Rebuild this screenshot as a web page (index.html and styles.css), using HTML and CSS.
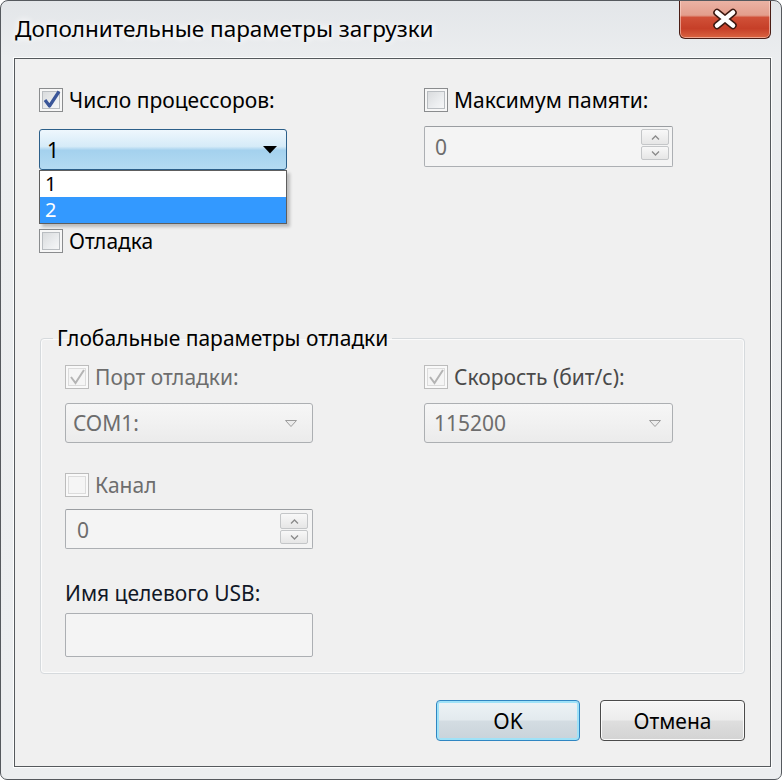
FILE: index.html
```html
<!DOCTYPE html>
<html lang="ru">
<head>
<meta charset="utf-8">
<title>Дополнительные параметры загрузки</title>
<link rel="stylesheet" href="styles.css">
</head>
<body>
<div class="window">
  <div class="titlebar">
    <span class="title">Дополнительные параметры загрузки</span>
    <button class="close" aria-label="Закрыть">
      <svg width="28" height="22" viewBox="0 0 28 22"><path class="x-out" d="M6 4.5 L22 17.5 M22 4.5 L6 17.5"/><path class="x-in" d="M6 4.5 L22 17.5 M22 4.5 L6 17.5"/></svg>
    </button>
  </div>
  <div class="client">
    <div class="top">
      <div class="col">
        <div class="check">
          <span class="cb"><svg viewBox="0 0 24 24"><path class="tick" d="M6 12 L10.5 18 L20 3.5"/></svg></span>
          <span>Число процессоров:</span>
        </div>
        <div class="combo-wrap">
          <div class="combo focus"><span class="cval">1</span><svg width="14" height="8" viewBox="0 0 14 8"><path d="M0 0 H14 L7 7.5 Z" fill="#000"/></svg></div>
          <ul class="listbox">
            <li>1</li>
            <li class="sel">2</li>
          </ul>
        </div>
        <div class="check check-debug">
          <span class="cb"></span>
          <span>Отладка</span>
        </div>
      </div>
      <div class="col">
        <div class="check">
          <span class="cb"></span>
          <span>Максимум памяти:</span>
        </div>
        <div class="spin spin-top">
          <span class="sval">0</span>
          <span class="sbtns">
            <span class="sb"><svg width="9" height="5" viewBox="0 0 9 5"><path d="M1 4.5 L4.5 1 L8 4.5"/></svg></span>
            <span class="sb"><svg width="9" height="5" viewBox="0 0 9 5"><path d="M1 0.5 L4.5 4 L8 0.5"/></svg></span>
          </span>
        </div>
      </div>
    </div>

    <fieldset class="group">
      <legend>Глобальные параметры отладки</legend>
      <div class="group-grid">
        <div class="col">
          <div class="check dis">
            <span class="cb"><svg viewBox="0 0 24 24"><path class="tick-dis" d="M6 12 L10.5 18 L19 5"/></svg></span>
            <span>Порт отладки:</span>
          </div>
          <div class="combo dcombo"><span class="cval">COM1:</span><svg width="12" height="7" viewBox="0 0 12 7"><path d="M0.5 0.5 H11.5 L6 6.5 Z" fill="#ececec" stroke="#9c9c9c"/></svg></div>
          <div class="check dis check-canal">
            <span class="cb"></span>
            <span>Канал</span>
          </div>
          <div class="spin spin-canal">
            <span class="sval">0</span>
            <span class="sbtns">
              <span class="sb"><svg width="9" height="5" viewBox="0 0 9 5"><path d="M1 4.5 L4.5 1 L8 4.5"/></svg></span>
              <span class="sb"><svg width="9" height="5" viewBox="0 0 9 5"><path d="M1 0.5 L4.5 4 L8 0.5"/></svg></span>
            </span>
          </div>
          <div class="usb-label">Имя целевого USB:</div>
          <div class="textbox"></div>
        </div>
        <div class="col">
          <div class="check dis dis-dark">
            <span class="cb"><svg viewBox="0 0 24 24"><path class="tick-dis" d="M6 12 L10.5 18 L19 5"/></svg></span>
            <span>Скорость (бит/с):</span>
          </div>
          <div class="combo dcombo dcombo-r"><span class="cval">115200</span><svg width="12" height="7" viewBox="0 0 12 7"><path d="M0.5 0.5 H11.5 L6 6.5 Z" fill="#ececec" stroke="#9c9c9c"/></svg></div>
        </div>
      </div>
    </fieldset>

    <div class="buttons">
      <button class="btn btn-default">OK</button>
      <button class="btn btn-cancel">Отмена</button>
    </div>
  </div>
</div>
</body>
</html>
```
FILE: styles.css
```css
html, body {
  margin: 0;
  padding: 0;
  background: #ffffff;
}

body {
  font-family: "Noto Sans", "Open Sans", sans-serif;
  font-weight: 400;
  color: #000;
}

.window {
  box-sizing: border-box;
  width: 782px;
  height: 780px;
  border: 1px solid #55595e;
  border-radius: 8px 8px 7px 7px;
  padding: 0 10px 12px 13px;
  background: linear-gradient(180deg, #e3e6e9 0, #ebedef 57px, #eceef0 100%);
  display: flex;
  flex-direction: column;
  overflow: hidden;
}

/* ---------- title bar ---------- */
.titlebar {
  height: 57px;
  flex: none;
  display: flex;
  align-items: flex-start;
}

.title {
  margin: 14px 0 0 1px;
  font-size: 22.5px;
  line-height: 28px;
  color: #000;
  text-shadow: 0 0 6px #fff, 0 0 10px #fff;
}

.close {
  margin-left: auto;
  margin-top: -1px;
  width: 92px;
  height: 39px;
  padding: 0;
  box-sizing: border-box;
  border: 1px solid #4a1d15;
  border-top: none;
  border-radius: 0 0 6px 6px;
  background: linear-gradient(180deg, #ebb4a6 0%, #e39e8c 40%, #d05038 46%, #c63f28 75%, #da6440 100%);
  box-shadow: inset 0 0 0 1px rgba(255, 220, 210, 0.55);
  display: flex;
  align-items: center;
  justify-content: center;
}

.close svg {
  display: block;
}

.x-out {
  fill: none;
  stroke: #3d1a12;
  stroke-width: 7.5;
  stroke-linecap: round;
}

.x-in {
  fill: none;
  stroke: #ffffff;
  stroke-width: 4.5;
  stroke-linecap: round;
}

/* ---------- client area ---------- */
.client {
  flex: 1;
  border: 1px solid #55595d;
  background: #f0f0f0;
  padding: 29px 0 0 24px;
  box-shadow: 0 0 0 1px rgba(255, 255, 255, 0.85);
  display: flex;
  flex-direction: column;
}

.top {
  display: grid;
  grid-template-columns: 248px 249px;
  column-gap: 137px;
}

.col {
  display: flex;
  flex-direction: column;
}

/* checkbox rows */
.check {
  display: flex;
  align-items: center;
  gap: 6px;
  height: 24px;
  font-size: 21px;
  line-height: 24px;
  white-space: nowrap;
}

.cb {
  box-sizing: border-box;
  width: 24px;
  height: 24px;
  flex: none;
  border: 1px solid #8a8c8e;
  background: linear-gradient(135deg, #d4d6d8 0%, #eceef0 60%, #fbfbfb 100%);
  box-shadow: inset 0 0 0 2px #f7f7f7, inset 0 0 0 3px #b9bdc1;
  position: relative;
}

.cb svg {
  position: absolute;
  left: -1px;
  top: -1px;
  width: 24px;
  height: 24px;
  overflow: visible;
}

.tick {
  fill: none;
  stroke: #3a5699;
  stroke-width: 3.2;
  stroke-linejoin: round;
}

.tick-dis {
  fill: none;
  stroke: #b4b4b4;
  stroke-width: 2;
}

.dis {
  color: #6d6d6d;
}

.dis-dark {
  color: #4a4a4a;
}

.dis .cb {
  border-color: #bcbcbc;
  background: #f5f5f5;
  box-shadow: inset 0 0 0 2px #f9f9f9, inset 0 0 0 3px #dcdcdc;
}

/* combos */
.combo-wrap {
  position: relative;
  margin-top: 17px;
}

.combo {
  box-sizing: border-box;
  height: 41px;
  display: flex;
  align-items: center;
  padding: 0 9px 0 7px;
  border-radius: 3px;
  font-size: 21px;
}

.cval {
  flex: 1;
}

.combo svg {
  display: block;
  flex: none;
}

.combo.focus {
  border: 1px solid #2c5f89;
  background: linear-gradient(180deg, #eef7fd 0%, #d6ebf8 42%, #a4d1ee 52%, #b4dbf2 100%);
}

.listbox {
  position: absolute;
  left: 0;
  top: 100%;
  width: 100%;
  box-sizing: border-box;
  margin: 0;
  padding: 0;
  list-style: none;
  background: #fff;
  border: 1px solid #5e5e5e;
  box-shadow: 3px 3px 3px rgba(0, 0, 0, 0.22);
  z-index: 2;
}

.listbox li {
  height: 26px;
  line-height: 26px;
  padding-left: 5px;
  font-size: 20px;
}

.listbox li.sel {
  background: #3399ff;
  color: #fff;
}

.check-debug {
  margin-top: 59px;
}

/* spinners */
.spin {
  box-sizing: border-box;
  display: flex;
  align-items: flex-start;
  border: 1px solid #acafb3;
  border-top-color: #9a9da1;
  border-radius: 2px;
  background: #f4f4f4;
  padding: 1px 3px 0 10px;
  font-size: 21px;
  color: #6d6d6d;
}

.spin-top {
  margin-top: 14px;
  height: 41px;
}

.sval {
  flex: 1;
  align-self: center;
  line-height: 24px;
}

.sbtns {
  display: flex;
  flex-direction: column;
  gap: 1px;
  margin-top: 1px;
}

.sb {
  box-sizing: border-box;
  width: 28px;
  height: 16px;
  border: 1px solid #c4c6c8;
  border-radius: 2px;
  background: linear-gradient(180deg, #f8f8f8, #e6e6e6);
  display: flex;
  align-items: center;
  justify-content: center;
}

.sb + .sb {
  height: 14px;
}

.sb svg {
  display: block;
}

.sb path {
  fill: none;
  stroke: #8a8a8a;
  stroke-width: 1.3;
}

/* group box */
.group {
  margin: 72px 0 0 1px;
  width: 705px;
  box-sizing: border-box;
  border: 1px solid #d6dadd;
  border-radius: 4px;
  padding: 0 0 16px 0;
  min-width: 0;
  box-shadow: inset 0 0 0 1px #fbfbfb;
}

.group legend {
  margin-left: 12px;
  padding: 0 4px;
  font-size: 21px;
  line-height: 26px;
  color: #000;
}

.group-grid {
  display: grid;
  grid-template-columns: 248px 249px;
  column-gap: 111px;
  padding: 14px 0 0 24px;
}

.dcombo {
  margin-top: 14px;
  height: 40px;
  border: 1px solid #acafb2;
  background: linear-gradient(180deg, #f6f6f6 0%, #f1f1f1 50%, #ebebeb 100%);
  color: #6d6d6d;
  padding: 0 15px 0 7px;
}

.dcombo-r {
  padding: 0 11px 0 9px;
}

.check-canal {
  margin-top: 30px;
}

.spin-canal {
  margin-top: 12px;
  height: 40px;
  padding: 2px 4px 0 11px;
}

.usb-label {
  margin-top: 32px;
  font-size: 21px;
  line-height: 25px;
  color: #111827;
  white-space: nowrap;
}

.textbox {
  margin-top: 7px;
  height: 44px;
  box-sizing: border-box;
  border: 1px solid #acafb3;
  border-radius: 2px;
  background: #f4f4f4;
}

/* buttons */
.buttons {
  display: flex;
  justify-content: flex-end;
  gap: 20px;
  margin-top: 26px;
  padding-right: 25px;
}

.btn {
  box-sizing: border-box;
  height: 41px;
  padding: 0;
  font-family: "Noto Sans", "Open Sans", sans-serif;
  font-size: 21px;
  color: #000;
  border-radius: 4px;
}

.btn-default {
  width: 144px;
  border: 1px solid #2f86c2;
  background: linear-gradient(180deg, #edf3f6 0%, #e3eaee 48%, #d3dce2 52%, #c9d3da 100%);
  box-shadow: inset 0 0 0 2px #9fe2f8;
}

.btn-cancel {
  width: 145px;
  border: 1px solid #4b4b4b;
  background: linear-gradient(180deg, #f6f6f6 0%, #ededed 48%, #dedede 52%, #d3d3d3 100%);
  box-shadow: inset 0 0 0 1px #fbfbfb;
}
```
